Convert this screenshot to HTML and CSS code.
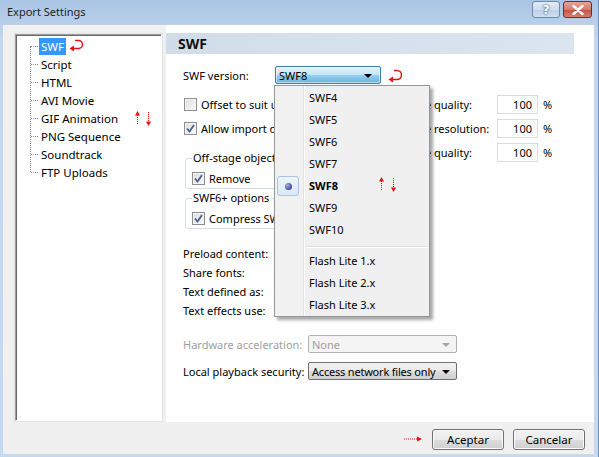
FILE: index.html
```html
<!DOCTYPE html>
<html lang="en">
  <head>
    <meta charset="utf-8">
    <title>Export Settings</title>
    <link rel="stylesheet" href="styles.css">
  </head>
  <body>
    <div class="window">
      <div class="titlebar">
        <span class="title">Export Settings</span>
        <div class="caption">
          <button class="cap help">?</button>
          <button class="cap close">
            <svg width="12" height="10" viewBox="0 0 12 10"><path d="M1.5 1 L10.5 9 M10.5 1 L1.5 9" stroke="#fff" stroke-width="2.4" stroke-linecap="round"/></svg>
          </button>
        </div>
      </div>

      <div class="client">
        <div class="sidebar">
          <div class="tree-box">
            <ul class="tree">
              <li><span class="sel">SWF</span>
                <svg class="ret" width="15" height="12" viewBox="0 0 15 12"><path d="M6 1.5 H9.5 a4 4 0 0 1 0 8 H4" fill="none" stroke="#e81010" stroke-width="1.5"/><path d="M0.5 9.5 L5 6.5 L5 12.5 Z" fill="#e81010"/></svg>
              </li>
              <li><span>Script</span></li>
              <li><span>HTML</span></li>
              <li><span>AVI Movie</span></li>
              <li><span>GIF Animation</span>
                <svg class="updown" width="16" height="15" viewBox="0 0 16 15"><path d="M2.5 4 V13" stroke="#e81010" stroke-dasharray="1 1"/><path d="M2.5 0 L0 4.5 L5 4.5 Z" fill="#e81010"/><path d="M13.5 1 V10" stroke="#e81010" stroke-dasharray="1 1"/><path d="M13.5 15 L11 10.5 L16 10.5 Z" fill="#e81010"/></svg>
              </li>
              <li><span>PNG Sequence</span></li>
              <li><span>Soundtrack</span></li>
              <li><span>FTP Uploads</span></li>
            </ul>
          </div>
        </div>

        <div class="panel">
          <div class="panel-head">SWF</div>
          <div class="form">
            <div class="version-row">
              <span class="lbl-version">SWF version:</span>
              <div class="combo open"><span>SWF8</span><i class="arrow"></i></div>
              <svg class="ret" width="14" height="13" viewBox="0 0 14 13"><path d="M6 1.5 H9 a4.5 4.5 0 0 1 0 9 H4" fill="none" stroke="#e81010" stroke-width="1.5"/><path d="M0.5 10.5 L5 7.5 L5 13.5 Z" fill="#e81010"/></svg>
            </div>

            <div class="split">
              <div class="left-col">
                <label class="check-row"><span class="check"></span>Offset to suit user</label>
                <label class="check-row"><span class="check on"></span>Allow import of</label>
                <fieldset class="group first">
                  <legend>Off-stage objects</legend>
                  <label class="check-row"><span class="check on"></span>Remove</label>
                </fieldset>
                <fieldset class="group">
                  <legend>SWF6+ options</legend>
                  <label class="check-row"><span class="check on"></span>Compress SWF</label>
                </fieldset>
              </div>
              <div class="right-col">
                <span>Image quality:</span><span class="num">100</span><span>%</span>
                <span>Image resolution:</span><span class="num">100</span><span>%</span>
                <span>Image quality:</span><span class="num">100</span><span>%</span>
              </div>
            </div>

            <div class="plain-rows">
              <div>Preload content:</div>
              <div>Share fonts:</div>
              <div>Text defined as:</div>
              <div>Text effects use:</div>
            </div>

            <div class="select-row disabled">
              <span class="lbl-select">Hardware acceleration:</span>
              <div class="combo flat"><span>None</span><i class="arrow"></i></div>
            </div>
            <div class="select-row second">
              <span class="lbl-select">Local playback security:</span>
              <div class="combo btn"><span>Access network files only</span><i class="arrow"></i></div>
            </div>
          </div>
        </div>

        <div class="footer">
          <svg class="go" width="18" height="6" viewBox="0 0 18 6"><path d="M0 3 H13" stroke="#e81010" stroke-dasharray="1 1"/><path d="M18 3 L13 0.5 L13 5.5 Z" fill="#e81010"/></svg>
          <button class="push">Aceptar</button>
          <button class="push">Cancelar</button>
        </div>
      </div>

      <div class="dropdown">
        <ul class="menu">
          <li>SWF4</li>
          <li>SWF5</li>
          <li>SWF6</li>
          <li>SWF7</li>
          <li class="current"><span class="radio"><i></i></span>SWF8
            <svg class="updown" width="17" height="15" viewBox="0 0 17 15"><path d="M2.5 4 V13" stroke="#e81010" stroke-dasharray="1 1"/><path d="M2.5 0 L0 4.5 L5 4.5 Z" fill="#e81010"/><path d="M14.5 1 V10" stroke="#e81010" stroke-dasharray="1 1"/><path d="M14.5 15 L12 10.5 L17 10.5 Z" fill="#e81010"/></svg>
          </li>
          <li>SWF9</li>
          <li>SWF10</li>
          <li class="sep"></li>
          <li>Flash Lite 1.x</li>
          <li>Flash Lite 2.x</li>
          <li>Flash Lite 3.x</li>
        </ul>
      </div>
    </div>
  </body>
</html>
```

FILE: styles.css
```css
* {
  box-sizing: border-box;
}
body {
  margin: 0;
  font-family: "Noto Sans", sans-serif;
  font-size: 11.5px;
  color: #000;
}
.window {
  position: relative;
  width: 599px;
  height: 457px;
  display: flex;
  flex-direction: column;
  padding: 0 4px 3px 3px;
  background: linear-gradient(to bottom, #a9c4e5, #c3d7ee 40px, #c6d9ef);
  border-right: 1px solid #6a8fc0;
}
.titlebar {
  height: 25px;
  display: flex;
  align-items: flex-start;
}
.title {
  margin: 4px 0 0 4px;
  font-size: 11px;
  color: #1e1e1e;
}
.caption {
  margin-left: auto;
  margin-top: 1px;
  margin-right: 2px;
  display: flex;
  gap: 3px;
}
.cap {
  height: 17px;
  padding: 0;
  border-radius: 3px;
  display: grid;
  place-items: center;
  font-family: "DejaVu Sans", sans-serif;
}
.help {
  width: 28px;
  border: 1px solid #6d88ad;
  background: linear-gradient(to bottom, #e4edf7, #cddcee 50%, #bccfe6 51%, #d0dff0);
  color: #fff;
  font-weight: bold;
  font-size: 13px;
  text-shadow: 0 0 2px #3d5878, 0 0 1px #3d5878;
}
.close {
  width: 29px;
  border: 1px solid #6e2b2b;
  background: linear-gradient(to bottom, #e3a699, #d27a6c 50%, #c2503f 51%, #d7806d);
}

.client {
  flex: 1;
  display: grid;
  grid-template-columns: 163px 1fr;
  grid-template-rows: 1fr 32px;
  background: #f0f0f0;
}

/* left tree */
.sidebar {
  padding: 9px 4px 1px 12px;
}
.tree-box {
  height: 100%;
  background: #fff;
  border-top: 1px solid #a0a0a0;
  border-left: 1px solid #a0a0a0;
  border-right: 1px solid #fff;
  border-bottom: 1px solid #fff;
  box-shadow: inset 1px 1px 0 #696969, 0 0 0 1px #e3e3e3;
  padding-top: 2px;
}
.tree {
  list-style: none;
  margin: 0;
  padding: 0;
  position: relative;
}
.tree::before {
  content: "";
  position: absolute;
  left: 14px;
  top: 9px;
  height: 126px;
  border-left: 1px dotted #8c8c8c;
}
.tree li {
  position: relative;
  height: 18px;
  line-height: 18px;
  padding-left: 23px;
  display: flex;
  align-items: center;
}
.tree li::before {
  content: "";
  position: absolute;
  left: 15px;
  top: 9px;
  width: 7px;
  border-top: 1px dotted #8c8c8c;
}
.tree li span {
  padding: 0 2px;
  line-height: 17px;
}
.tree .sel {
  background: #3399ff;
  color: #fff;
}
.tree .ret {
  margin-left: 3px;
  margin-top: -2px;
}
.tree .updown {
  margin-left: 15px;
}

/* right panel */
.panel {
  background: #fff;
  padding-top: 8px;
}
.panel-head {
  height: 21px;
  line-height: 21px;
  margin-right: 20px;
  padding-left: 12px;
  font-size: 14px;
  font-weight: bold;
  color: #111;
  background: linear-gradient(to right, #d0dde9, #dbe5f0);
}
.form {
  padding-left: 17px;
  font-size: 11px;
  white-space: nowrap;
}
.version-row {
  margin-top: 12px;
  height: 18px;
  display: flex;
  align-items: center;
}
.lbl-version {
  width: 92px;
}
.version-row .ret {
  margin-left: 7px;
}

.combo {
  position: relative;
  height: 18px;
  display: flex;
  align-items: center;
  padding-left: 3px;
  border-radius: 2px;
}
.combo .arrow {
  position: absolute;
  right: 6px;
  top: 7px;
  border-left: 4px solid transparent;
  border-right: 4px solid transparent;
  border-top: 4px solid #000;
}
.combo.open {
  width: 106px;
  border: 1px solid #3c7fb1;
  background: linear-gradient(to bottom, #e5f4fc, #c4e5f6 50%, #98d1ef 51%, #68b3db);
  box-shadow: inset 0 0 0 1px rgba(255, 255, 255, 0.5);
}
.combo.open .arrow {
  right: 8px;
}
.combo.flat {
  width: 149px;
  border: 1px solid #adb2b5;
  background: #f4f4f4;
  color: #a0a0a0;
}
.combo.flat .arrow {
  border-top-color: #a6a6a6;
}
.combo.btn {
  width: 149px;
  border: 1px solid #707070;
  background: linear-gradient(to bottom, #f2f2f2, #ebebeb 50%, #dddddd 51%, #cfcfcf);
  letter-spacing: -0.2px;
}

.split {
  margin-top: 8px;
  display: flex;
}
.left-col {
  width: 91px;
  flex: none;
}
.check-row {
  height: 24px;
  display: flex;
  align-items: center;
  gap: 4px;
}
.check {
  flex: none;
  width: 13px;
  height: 13px;
  margin-left: 1px;
  border: 1px solid #8e8f8f;
  background: linear-gradient(135deg, #dcdcdc, #fbfbfb);
  box-shadow: inset 0 0 0 1px #f4f4f4;
}
.check.on {
  background-image: url("data:image/svg+xml,%3Csvg xmlns='http://www.w3.org/2000/svg' width='11' height='11'%3E%3Cpath d='M2 5.5 L4.5 8.5 L9 2' fill='none' stroke='%234a5f97' stroke-width='1.8'/%3E%3C/svg%3E"), linear-gradient(135deg, #dcdcdc, #fbfbfb);
  background-repeat: no-repeat;
  background-position: center;
}
.group {
  width: 150px;
  margin: 0 0 0 2px;
  padding: 0 0 1px 6px;
  border: 1px solid #d5dfe5;
  border-radius: 3px;
}
.group.first {
  margin-top: 11px;
  margin-bottom: 2px;
}
.group legend {
  padding: 0 1px;
  line-height: 14px;
}
.group .check-row {
  height: 18px;
  margin-top: 4px;
}
.group .check {
  margin-left: 0;
}

.right-col {
  padding-left: 124px;
  display: grid;
  grid-template-columns: 96px 41px auto;
  grid-auto-rows: 24px;
  column-gap: 3px;
  align-items: center;
  align-self: flex-start;
}
.num {
  height: 19px;
  padding-right: 5px;
  border: 1px solid #d7dce3;
  text-align: right;
  line-height: 17px;
}
.num + span {
  margin-left: 2px;
}

.plain-rows {
  margin-top: 15px;
}
.plain-rows div {
  height: 19px;
  line-height: 19px;
}
.select-row {
  margin-top: 15px;
  display: flex;
  align-items: center;
  height: 18px;
}
.select-row.second {
  margin-top: 9px;
}
.lbl-select {
  width: 125px;
}
.select-row.disabled .lbl-select {
  color: #a0a0a0;
}

/* bottom buttons */
.footer {
  grid-column: 1 / 3;
  display: flex;
  justify-content: flex-end;
  align-items: flex-start;
  padding: 7px 9px 0 0;
  gap: 9px;
}
.footer .go {
  margin: 7px 1px 0 0;
}
.push {
  width: 72px;
  height: 21px;
  padding: 0;
  font: inherit;
  border: 1px solid #707070;
  border-radius: 3px;
  background: linear-gradient(to bottom, #f2f2f2, #ebebeb 50%, #dddddd 51%, #cfcfcf);
  box-shadow: inset 0 0 0 1px #fcfcfc;
}

/* open list of the SWF version combo */
.dropdown {
  position: absolute;
  left: 274px;
  top: 85px;
  width: 156px;
  height: 232px;
  border: 1px solid #979797;
  background: linear-gradient(to right, #f1f1f1 28px, #e2e3e3 28px, #e2e3e3 29px, #fff 29px, #fff 30px, #f0f0f0 30px);
  box-shadow: 3px 3px 3px rgba(0, 0, 0, 0.35);
  font-size: 11px;
}
.menu {
  list-style: none;
  margin: 0;
  padding: 1px 0 0;
}
.menu li {
  position: relative;
  height: 22px;
  line-height: 22px;
  padding-left: 34px;
}
.menu li.current {
  font-weight: bold;
}
.menu .radio {
  position: absolute;
  left: 2px;
  top: 1px;
  width: 22px;
  height: 20px;
  border: 1px solid #a8c4e6;
  border-radius: 3px;
  background: linear-gradient(to bottom, #eef4fc, #dbe8f8);
  display: grid;
  place-items: center;
}
.menu .radio i {
  width: 7px;
  height: 7px;
  border-radius: 50%;
  background: radial-gradient(circle at 35% 35%, #a7afe6, #3a47a0 70%);
}
.menu .updown {
  position: absolute;
  left: 104px;
  top: 2px;
}
.menu li.sep {
  height: 9px;
  margin-left: 31px;
  padding: 0;
}
.menu li.sep::before {
  content: "";
  position: absolute;
  left: 0;
  right: 2px;
  top: 5px;
  border-top: 1px solid #e0e0e0;
  border-bottom: 1px solid #fff;
}
```
